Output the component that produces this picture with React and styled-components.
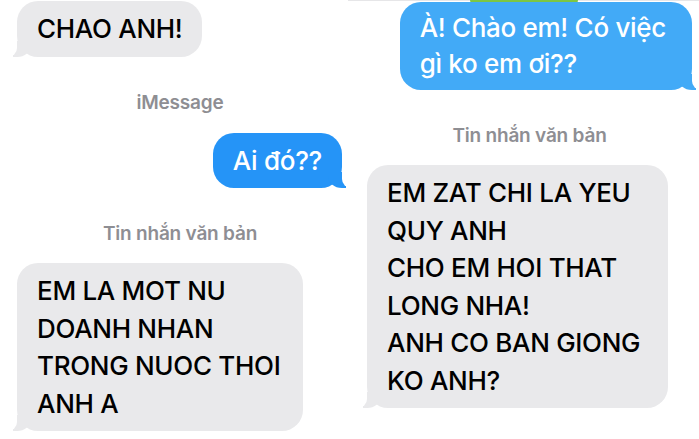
import React from "react";
import styled, { createGlobalStyle, css } from "styled-components";

const GlobalStyle = createGlobalStyle`
  html, body {
    margin: 0;
    padding: 0;
    background: #ffffff;
  }
  body {
    width: 699px;
    height: 439px;
    overflow: hidden;
    font-family: Inter, "Noto Sans", "Liberation Sans", sans-serif;
  }
`;

const Page = styled.div`
  display: grid;
  grid-template-columns: 360px 339px;
  width: 699px;
  height: 439px;
  overflow: hidden;
`;

const Column = styled.div`
  position: relative;
  display: flex;
  flex-direction: column;
  align-items: flex-start;
  padding-top: ${({ $top }) => $top}px;
  ${({ $edge }) =>
    $edge &&
    css`
      border-top: 1px solid #e6e6e8;
      margin-left: -12px;
      padding-left: 12px;
    `}
`;

/* bottom of an earlier SMS bubble, peeking from above the screenshot */
const GreenPeek = styled.div`
  position: absolute;
  top: -1px;
  left: 122px;
  width: 108px;
  height: 7px;
  background: #7cc644;
  border-radius: 0 0 14px 14px;
`;

const Bubble = styled.div`
  position: relative;
  z-index: 1;
  padding: ${({ $padY = 9, $padRight = 20 }) =>
    `${$padY}px ${$padRight}px ${$padY}px 20px`};
  border-radius: 21px;
  font-size: 26px;
  line-height: ${({ $lh = 37.5 }) => $lh}px;
  font-weight: 500;
  letter-spacing: -0.3px;
  white-space: nowrap;
  margin-top: ${({ $gap }) => $gap || 0}px;
  background: ${({ $bg }) => $bg};
  color: ${({ $sent }) => ($sent ? "#ffffff" : "#000000")};
  align-self: ${({ $sent }) => ($sent ? "flex-end" : "flex-start")};
  margin-left: ${({ $sent, $side }) => ($sent ? 0 : $side)}px;
  margin-right: ${({ $sent, $side }) => ($sent ? $side : 0)}px;

  &::before,
  &::after {
    content: "";
    position: absolute;
    bottom: 0;
    height: 16px;
  }

  &::before {
    width: 18px;
    background: ${({ $bg }) => $bg};
    ${({ $sent }) =>
      $sent
        ? css`
            right: -4px;
            border-bottom-left-radius: 14px 12px;
          `
        : css`
            left: -4px;
            border-bottom-right-radius: 14px 12px;
          `}
  }

  &::after {
    width: 10px;
    background: #ffffff;
    ${({ $sent }) =>
      $sent
        ? css`
            right: -10px;
            border-bottom-left-radius: 9px;
          `
        : css`
            left: -10px;
            border-bottom-right-radius: 9px;
          `}
  }
`;

const Label = styled.div`
  align-self: stretch;
  text-align: center;
  margin-top: ${({ $gap }) => $gap}px;
  font-size: 19px;
  line-height: 22px;
  font-weight: 600;
  letter-spacing: -0.2px;
  color: #8e8e93;
`;

const Lines = ({ lines }) =>
  lines.map((line, i) => (
    <React.Fragment key={i}>
      {i > 0 && <br />}
      {line}
    </React.Fragment>
  ));

const GRAY = "#e9e9eb";
const BLUE = "#2594f7";
const BLUE_LIGHT = "#42aaf7";

export default function App() {
  return (
    <>
      <GlobalStyle />
      <Page>
        <Column $top={1}>
          <Bubble $bg={GRAY} $side={17}>
            CHAO ANH!
          </Bubble>
          <Label $gap={35}>iMessage</Label>
          <Bubble $sent $bg={BLUE} $side={18} $gap={19}>
            Ai đó??
          </Bubble>
          <Label $gap={35}>Tin nhắn văn bản</Label>
          <Bubble $bg={GRAY} $side={17} $gap={18} $padRight={23}>
            <Lines
              lines={["EM LA MOT NU", "DOANH NHAN", "TRONG NUOC THOI", "ANH A"]}
            />
          </Bubble>
        </Column>

        <Column $top={1} $edge>
          <GreenPeek />
          <Bubble $sent $bg={BLUE_LIGHT} $side={7} $lh={36} $padY={8} $padRight={26}>
            <Lines lines={["À! Chào em! Có việc", "gì ko em ơi??"]} />
          </Bubble>
          <Label $gap={35}>Tin nhắn văn bản</Label>
          <Bubble $bg={GRAY} $side={7} $gap={18} $padRight={28}>
            <Lines
              lines={[
                "EM ZAT CHI LA YEU",
                "QUY ANH",
                "CHO EM HOI THAT",
                "LONG NHA!",
                "ANH CO BAN GIONG",
                "KO ANH?",
              ]}
            />
          </Bubble>
        </Column>
      </Page>
    </>
  );
}
